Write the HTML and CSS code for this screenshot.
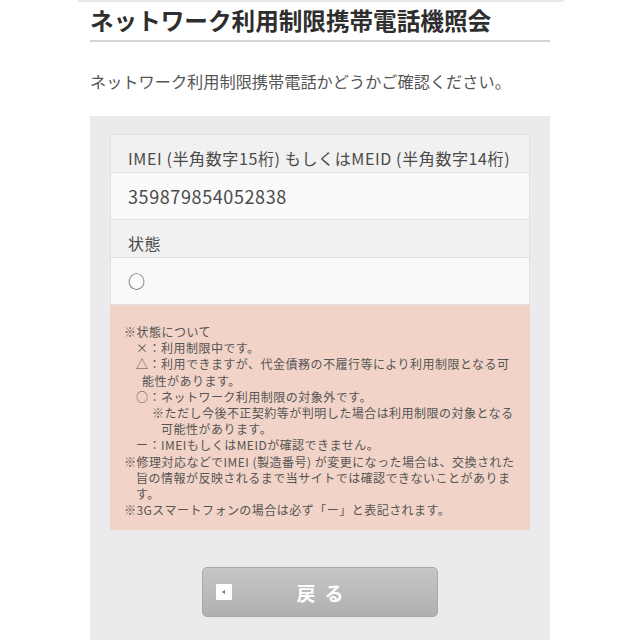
FILE: index.html
```html
<!DOCTYPE html>
<html lang="ja">
<head>
<meta charset="utf-8">
<title>ネットワーク利用制限携帯電話機照会</title>
<link rel="stylesheet" href="styles.css">
</head>
<body>
<div class="topline"></div>
<main class="page">
  <h1 class="title">ネットワーク利用制限携帯電話機照会</h1>
  <p class="lead">ネットワーク利用制限携帯電話かどうかご確認ください。</p>
  <section class="panel">
    <div class="table">
      <div class="row label">IMEI (半角数字15桁) もしくはMEID (半角数字14桁)</div>
      <div class="row value num">359879854052838</div>
      <div class="row label">状態</div>
      <div class="row value">○</div>
    </div>
    <div class="notes">
      <p class="note">※状態について</p>
      <p class="sym">×：利用制限中です。</p>
      <p class="sym">△：利用できますが、代金債務の不履行等により利用制限となる可<br>能性があります。</p>
      <p class="sym">○：ネットワーク利用制限の対象外です。</p>
      <p class="sub">※ただし今後不正契約等が判明した場合は利用制限の対象となる<br>可能性があります。</p>
      <p class="sym">ー：IMEIもしくはMEIDが確認できません。</p>
      <p class="note">※修理対応などでIMEI (製造番号) が変更になった場合は、交換された<br>旨の情報が反映されるまで当サイトでは確認できないことがありま<br>す。</p>
      <p class="note">※3Gスマートフォンの場合は必ず「ー」と表記されます。</p>
    </div>
    <div class="actions">
      <button class="back" type="button">
        <span class="back-icon"></span>
        <span class="back-text">戻る</span>
        <span></span>
      </button>
    </div>
  </section>
</main>
</body>
</html>
```
FILE: styles.css
```css
html, body {
  margin: 0;
  padding: 0;
  background: #ffffff;
}
body {
  font-family: "Noto Sans CJK JP", "Noto Sans", sans-serif;
  color: #444;
}
.topline {
  height: 2px;
  margin: 0 76px 0 78px;
  background: #e8e8e8;
}
.page {
  padding: 0 90px;
}
.title {
  margin: 0;
  padding: 3px 0 5px;
  font-size: 23.6px;
  line-height: 30px;
  font-weight: 700;
  color: #2e2e2e;
  border-bottom: 2px solid #d6d6d6;
}
.lead {
  margin: 27px 0 23px;
  font-size: 16.2px;
  line-height: 24px;
  color: #555;
}
.panel {
  background: #ebebed;
  padding: 18px 20px 30px;
  min-height: 500px;
}
.table {
  border: 1px solid #e1e1e3;
  border-bottom: 0;
}
.row {
  border-bottom: 1px solid #e1e1e3;
  padding: 0 17px;
}
.label {
  background: #f1f1f1;
  font-size: 16px;
  letter-spacing: 0.62px;
  line-height: 24px;
  padding-top: 11px;
  padding-bottom: 2px;
  color: #4a4a4a;
}
.value {
  background: #fafafa;
  font-size: 17px;
  line-height: 26px;
  padding-top: 10px;
  padding-bottom: 10px;
  color: #4a4a4a;
}
.num {
  font-size: 18px;
  letter-spacing: 0.6px;
}
.notes {
  background: #f2d3c7;
  padding: 19px 8px 12px 14px;
  font-size: 12px;
  letter-spacing: 0.48px;
  line-height: 16.2px;
  color: #555;
  white-space: nowrap;
}
.notes p {
  margin: 0;
}
.note {
  padding-left: 12px;
  text-indent: -12px;
}
.sym {
  padding-left: 18px;
  text-indent: -6px;
}
.sub {
  padding-left: 37px;
  text-indent: -9px;
}
.actions {
  display: flex;
  justify-content: center;
  padding-top: 37px;
}
.back {
  width: 236px;
  height: 50px;
  display: grid;
  grid-template-columns: 16px 1fr 16px;
  align-items: center;
  padding: 0 13px;
  border: 1px solid #a9a9a9;
  border-radius: 5px;
  background: linear-gradient(#c6c6c6, #b0b0b0);
  font-family: "Noto Sans CJK JP", sans-serif;
  cursor: pointer;
}
.back-icon {
  width: 16px;
  height: 16px;
  background: #ffffff;
  position: relative;
}
.back-icon::after {
  content: "";
  position: absolute;
  left: 6px;
  top: 5.5px;
  border-style: solid;
  border-width: 2.5px 3px 2.5px 0;
  border-color: transparent #6f6f6f transparent transparent;
}
.back-text {
  color: #ffffff;
  font-size: 19px;
  font-weight: 700;
  letter-spacing: 9px;
  text-indent: 9px;
  text-align: center;
}
```
